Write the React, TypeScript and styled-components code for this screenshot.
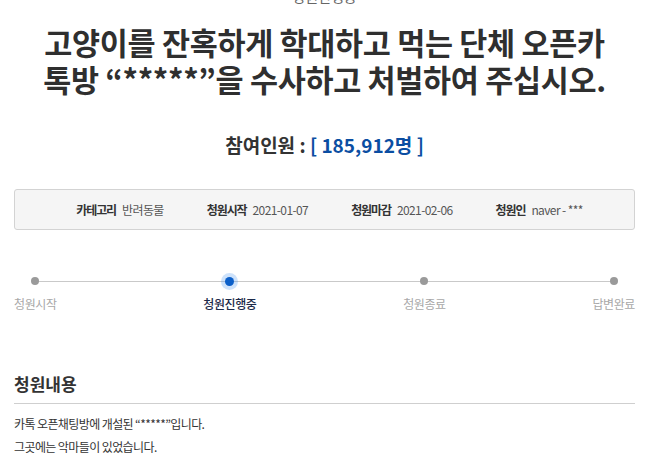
import React from 'react';
import styled, { createGlobalStyle } from 'styled-components';

const GlobalStyle = createGlobalStyle`
  html, body {
    margin: 0;
    padding: 0;
    background: #ffffff;
    overflow: hidden;
  }
  body {
    font-family: 'Noto Sans CJK KR', 'Noto Sans', sans-serif;
    color: #333333;
  }
`;

const Page = styled.div`
  padding: 0 14px;
  width: 621px;
`;

const StatusTop = styled.div`
  margin-top: -14px;
  height: 20px;
  line-height: 20px;
  font-size: 14px;
  color: #666666;
  text-align: center;
`;

const Title = styled.h1`
  margin: 18px 0 0;
  font-size: 30.5px;
  line-height: 37px;
  font-weight: 700;
  color: #2f2f2f;
  text-align: center;
  letter-spacing: -0.3px;
`;

const Participants = styled.div`
  margin-top: 34px;
  font-size: 19px;
  line-height: 26px;
  font-weight: 700;
  text-align: center;
  color: #333333;
`;

const Count = styled.span`
  color: #0b4ea2;
`;

const InfoBox = styled.ul`
  margin: 31px 0 0;
  padding: 0 0 0 10px;
  list-style: none;
  height: 39px;
  border: 1px solid #d3d3d3;
  border-radius: 3px;
  background: #f5f5f5;
  display: flex;
  justify-content: center;
  align-items: center;
  gap: 43px;
`;

const InfoItem = styled.li`
  display: flex;
  align-items: center;
  gap: 6px;
  font-size: 12px;
  line-height: 18px;
`;

const InfoLabel = styled.b`
  font-weight: 700;
  color: #333333;
  letter-spacing: -1.1px;
`;

const InfoValue = styled.span`
  color: #555555;
  letter-spacing: -0.6px;
`;

const Progress = styled.ol`
  margin: 43px 0 0;
  padding: 0;
  list-style: none;
  display: flex;
  justify-content: space-between;
  position: relative;

  &::before {
    content: '';
    position: absolute;
    left: 20px;
    right: 20px;
    top: 8px;
    height: 1px;
    background: #c9c9c9;
  }
`;

const Step = styled.li`
  display: flex;
  flex-direction: column;
  align-items: center;
  position: relative;
`;

const DotWrap = styled.span`
  width: 16px;
  height: 16px;
  display: flex;
  align-items: center;
  justify-content: center;
`;

const Dot = styled.span<{ $active?: boolean }>`
  width: ${({ $active }) => ($active ? '9px' : '8px')};
  height: ${({ $active }) => ($active ? '9px' : '8px')};
  border-radius: 50%;
  background: ${({ $active }) => ($active ? '#0b5fc9' : '#9a9a9a')};
  box-shadow: ${({ $active }) => ($active ? '0 0 0 4px rgba(74, 150, 240, 0.28)' : 'none')};
`;

const StepLabel = styled.span<{ $active?: boolean }>`
  margin-top: 6px;
  font-size: 12px;
  line-height: 18px;
  color: ${({ $active }) => ($active ? '#1c2a4a' : '#a8a8a8')};
  font-weight: ${({ $active }) => ($active ? 500 : 400)};
  letter-spacing: -0.4px;
`;

const Section = styled.section`
  margin-top: 59px;
`;

const SectionTitle = styled.h2`
  margin: 0;
  padding-bottom: 7px;
  border-bottom: 1px solid #cfcfcf;
  font-size: 17px;
  line-height: 24px;
  font-weight: 700;
  color: #333333;
`;

const Body = styled.div`
  margin-top: 8px;
  font-size: 12px;
  line-height: 23px;
  color: #333333;
  letter-spacing: -0.6px;
`;

const steps = [
  { label: '청원시작' },
  { label: '청원진행중', active: true },
  { label: '청원종료' },
  { label: '답변완료' },
];

const info = [
  { label: '카테고리', value: '반려동물' },
  { label: '청원시작', value: '2021-01-07' },
  { label: '청원마감', value: '2021-02-06' },
  { label: '청원인', value: 'naver - ***' },
];

const App = () => {
  return (
    <>
      <GlobalStyle />
      <Page>
        <StatusTop>청원진행중</StatusTop>
        <Title>
          고양이를 잔혹하게 학대하고 먹는 단체 오픈카
          <br />
          톡방 “*****”을 수사하고 처벌하여 주십시오.
        </Title>
        <Participants>
          참여인원 : <Count>[ 185,912명 ]</Count>
        </Participants>
        <InfoBox>
          {info.map((item) => (
            <InfoItem key={item.label}>
              <InfoLabel>{item.label}</InfoLabel>
              <InfoValue>{item.value}</InfoValue>
            </InfoItem>
          ))}
        </InfoBox>
        <Progress>
          {steps.map((s) => (
            <Step key={s.label}>
              <DotWrap>
                <Dot $active={s.active} />
              </DotWrap>
              <StepLabel $active={s.active}>{s.label}</StepLabel>
            </Step>
          ))}
        </Progress>
        <Section>
          <SectionTitle>청원내용</SectionTitle>
          <Body>
            <div>카톡 오픈채팅방에 개설된 “*****”입니다.</div>
            <div>그곳에는 악마들이 있었습니다.</div>
          </Body>
        </Section>
      </Page>
    </>
  );
};

export default App;
